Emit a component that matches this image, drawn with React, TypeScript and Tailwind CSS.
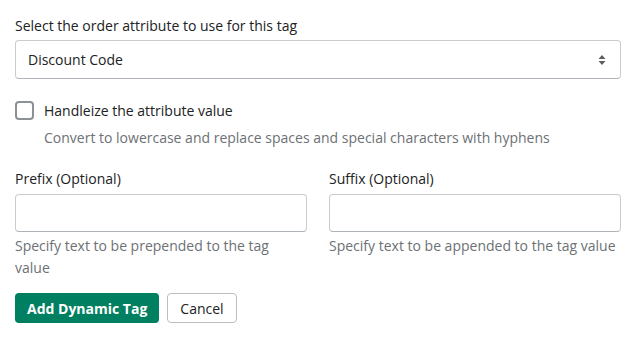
import { useState } from "react";

const SelectArrows = () => (
  <svg width="10" height="14" viewBox="0 0 10 14" className="text-[#5c5f62]">
    <path d="M5 2 L8.5 6 H1.5 Z" fill="currentColor" />
    <path d="M5 12 L8.5 8 H1.5 Z" fill="currentColor" />
  </svg>
);

function TextField({ label, help }: { label: string; help: string }) {
  return (
    <div className="flex flex-col">
      <label className="leading-[20px] mb-[5px]">{label}</label>
      <input
        type="text"
        className="h-[38px] w-full rounded-[4px] border border-[#c9cccf] border-b-[#aeb4b9] bg-white px-3 outline-none"
      />
      <p className="mt-[3px] leading-[22px] text-[#6d7175]">{help}</p>
    </div>
  );
}

export default function App() {
  const [attr, setAttr] = useState("discount_code");
  const [handleize, setHandleize] = useState(false);

  return (
    <div
      className="w-[634px] h-[338px] bg-white pl-[15px] pr-[13px] pt-[16px] text-[14px] text-[#202223]"
      style={{ fontFamily: '"Open Sans", "Noto Sans", sans-serif' }}
    >
      <label className="block leading-[20px] mb-[4px]">
        Select the order attribute to use for this tag
      </label>
      <div className="relative">
        <select
          value={attr}
          onChange={(e) => setAttr(e.target.value)}
          className="h-[39px] w-full appearance-none rounded-[4px] border border-[#c9cccf] border-b-[#aeb4b9] bg-white pl-[12px] pr-8 outline-none"
        >
          <option value="discount_code">Discount Code</option>
          <option value="shipping_method">Shipping Method</option>
          <option value="payment_gateway">Payment Gateway</option>
        </select>
        <span className="pointer-events-none absolute right-[14px] top-1/2 -translate-y-1/2 flex">
          <SelectArrows />
        </span>
      </div>

      <div className="mt-[22px] flex items-start gap-[10px]">
        <button
          onClick={() => setHandleize(!handleize)}
          className="h-[19px] w-[19px] shrink-0 rounded-[4px] border-2 border-[#8c9196] bg-white"
          aria-pressed={handleize}
        />
        <div className="flex flex-col">
          <span className="leading-[20px]">Handleize the attribute value</span>
          <span className="mt-[7px] leading-[20px] text-[#6d7175]">
            Convert to lowercase and replace spaces and special characters with hyphens
          </span>
        </div>
      </div>

      <div className="mt-[21px] grid grid-cols-2 gap-[22px]">
        <TextField
          label="Prefix (Optional)"
          help="Specify text to be prepended to the tag value"
        />
        <TextField
          label="Suffix (Optional)"
          help="Specify text to be appended to the tag value"
        />
      </div>

      <div className="mt-[14px] flex gap-[8px]">
        <button className="h-[30px] rounded-[4px] bg-[#008060] px-[12px] font-bold text-white">
          Add Dynamic Tag
        </button>
        <button className="h-[30px] rounded-[4px] border border-[#babfc3] bg-white px-[12px] text-[#202223]">
          Cancel
        </button>
      </div>
    </div>
  );
}
